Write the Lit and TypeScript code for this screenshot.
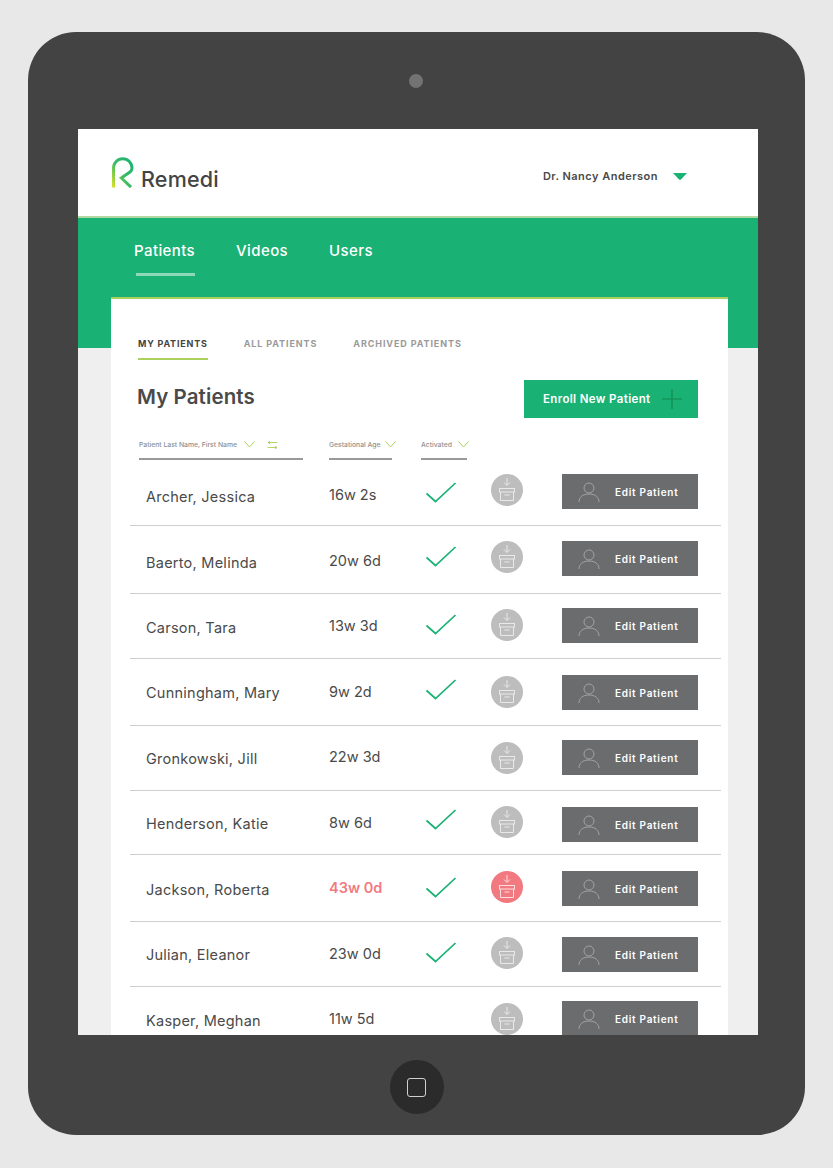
import { LitElement, html, css, svg } from "lit";
import { customElement } from "lit/decorators.js";

interface Row {
  name: string; age: string; top: number; bottom: number;
  nameY: number; ageY: number; checkY: number | null; archY: number; btnY: number;
  alert?: boolean;
}

const rows: Row[] = [
  { name: "Archer, Jessica", age: "16w 2s", top: 460, bottom: 526, nameY: 497, ageY: 495, checkY: 493, archY: 490, btnY: 491.5 },
  { name: "Baerto, Melinda", age: "20w 6d", top: 526, bottom: 594, nameY: 563, ageY: 561, checkY: 557, archY: 557, btnY: 558.5 },
  { name: "Carson, Tara", age: "13w 3d", top: 594, bottom: 659, nameY: 628, ageY: 626, checkY: 625, archY: 625, btnY: 625.5 },
  { name: "Cunningham, Mary", age: "9w 2d", top: 659, bottom: 726, nameY: 693, ageY: 692, checkY: 690, archY: 692, btnY: 692.5 },
  { name: "Gronkowski, Jill", age: "22w 3d", top: 726, bottom: 791, nameY: 759, ageY: 757, checkY: null, archY: 758, btnY: 757.5 },
  { name: "Henderson, Katie", age: "8w 6d", top: 791, bottom: 855, nameY: 824, ageY: 823, checkY: 820, archY: 822, btnY: 824.5 },
  { name: "Jackson, Roberta", age: "43w 0d", top: 855, bottom: 922, nameY: 890, ageY: 888, checkY: 888, archY: 887, btnY: 888.5, alert: true },
  { name: "Julian, Eleanor", age: "23w 0d", top: 922, bottom: 987, nameY: 955, ageY: 954, checkY: 953, archY: 953, btnY: 954.5 },
  { name: "Kasper, Meghan", age: "11w 5d", top: 987, bottom: 1050, nameY: 1021, ageY: 1019, checkY: null, archY: 1019, btnY: 1018.5 },
];

const chevron = svg`<svg class="chev" width="11" height="7" viewBox="0 0 11 7"><path d="M.5 .5 5.5 6 10.5 .5" fill="none" stroke="#a9d15c" stroke-width="1"/></svg>`;

@customElement("app-root")
export class AppRoot extends LitElement {
  static styles = css`
    :host { display: block; height: 1168px; background: #e8e8e8; font-family: Inter, Roboto, "Liberation Sans", sans-serif; overflow: hidden; }
    .device { margin: 32px 28px 0; width: 777px; height: 1103px; border-radius: 48px; background: #434344; display: flex; flex-direction: column; align-items: flex-start; }
    .bezel-top { height: 97px; flex: none; align-self: stretch; display: flex; align-items: center; justify-content: center; }
    .camera { width: 14px; height: 14px; border-radius: 50%; background: #737373; margin: 0 1px 0 0; }
    .screen { width: 680px; height: 906px; flex: none; margin-left: 50px; background: #efefef; overflow: hidden; display: flex; flex-direction: column; }
    .bezel-bottom { flex: 1; align-self: stretch; display: flex; align-items: center; justify-content: center; padding-top: 4px; }
    .home { width: 54px; height: 54px; border-radius: 50%; background: #2b2b2c; display: flex; align-items: center; justify-content: center; }
    .home i { display: block; width: 17px; height: 17px; border: 1px solid #d0d0d0; border-radius: 3px; }

    .top { height: 87px; flex: none; background: #fff; display: flex; align-items: center; justify-content: space-between; padding: 0 71px 0 34px; }
    .logo { display: flex; align-items: flex-end; gap: 7px; }
    .logo span { font-size: 21.5px; font-weight: 500; color: #444; line-height: 20px; letter-spacing: .2px; }
    .user { display: flex; align-items: center; gap: 15px; font-size: 11px; font-weight: 600; color: #4a4a4a; letter-spacing: .48px; margin-top: 7px; }
    .rule { height: 2px; flex: none; background: #b4d8a2; }
    .body { flex: 1; padding: 0 30px 0 33px; background: linear-gradient(#19b174 130px, #efefef 130px); }
    nav { height: 79px; display: flex; gap: 41px; padding-left: 23px; }
    nav a { color: #fff; font-size: 15px; font-weight: 500; letter-spacing: .4px; height: 58px; line-height: 66px; box-sizing: border-box; }
    nav a.on { background: linear-gradient(#8fd9bb, #8fd9bb) 2px 100% / 59px 3px no-repeat; }
    .card { background: #fff; border-top: 2px solid #a9d15c; height: 760px; padding-left: 19px; padding-right: 7px; }
    .tabs { display: flex; gap: 36px; padding-left: 8px; height: 63px; box-sizing: border-box; padding-top: 31px; }
    .tabs span { font-size: 9px; font-weight: 700; letter-spacing: .9px; color: #9a9a9a; height: 30px; line-height: 27px; box-sizing: border-box; }
    .tabs span.on { color: #444; border-bottom: 2px solid #a9d15c; letter-spacing: .8px; }
    .title { display: flex; align-items: center; justify-content: space-between; height: 38px; margin-top: 18px; padding: 0 23px 0 7px; }
    h1 { margin: 0 0 6px; font-size: 20.5px; font-weight: 600; color: #4a4a4a; letter-spacing: .1px; }
    .enroll { width: 174px; height: 38px; background: #19b174; color: #fff; font-size: 11.5px; font-weight: 600; letter-spacing: .36px; display: flex; align-items: center; padding-left: 19px; box-sizing: border-box; gap: 11px; }
    .heads { display: flex; margin-top: 15px; padding-left: 9px; height: 27px; }
    .head { height: 27px; box-sizing: border-box; border-bottom: 2px solid #999; font-size: 6.8px; font-weight: 500; color: #8f8f8f; display: flex; align-items: center; gap: 7px; white-space: nowrap; padding-bottom: 2px; }
    .head.age-col { gap: 4px; }
    .head.act-col { gap: 6px; }
    .chev { flex: none; }
    .row { display: grid; grid-template-columns: 199px 97px 65px 71px 136px; border-bottom: 1px solid #cfcfcf; box-sizing: border-box; align-items: start; }
    .row:last-child { border-bottom: 0; }
    .name { padding-left: 16px; font-size: 14.5px; letter-spacing: .25px; line-height: 20px; color: #4a4a4a; white-space: nowrap; }
    .age { font-size: 14.5px; line-height: 20px; color: #4a4a4a; }
    .age.alert { color: #f2797f; font-weight: 600; }
    .check { display: block; }
    .arch { display: block; }
    .edit { width: 136px; height: 35px; background: #6b6c6e; color: #fff; display: flex; align-items: center; font-size: 10px; font-weight: 600; letter-spacing: .72px; gap: 14px; padding-left: 15px; box-sizing: border-box; }
  `;

  private archive(alert?: boolean) {
    const fill = alert ? "#f2797f" : "#bdbdbd";
    const s = alert ? "#fbdfe0" : "#e9e9e9";
    return svg`<svg class="arch" width="32" height="32" viewBox="0 0 32 32">
      <circle cx="16" cy="16" r="16" fill="${fill}"/>
      <path d="M16 4v7M13 8.5l3 3 3-3" fill="none" stroke="${s}" stroke-width="1"/>
      <rect x="8.5" y="14.5" width="15" height="3.5" fill="none" stroke="${s}" stroke-width="1"/>
      <path d="M9.5 18v8.5h13V18M13.5 21h5" fill="none" stroke="${s}" stroke-width="1"/>
    </svg>`;
  }

  private renderRow(r: Row) {
    const m = (c: number, h: number) => `margin-top:${c - r.top - h / 2}px`;
    return html`<div class="row" style="height:${r.bottom - r.top}px">
      <div class="name" style=${m(r.nameY, 20)}>${r.name}</div>
      <div class="age ${r.alert ? "alert" : ""}" style=${m(r.ageY, 20)}>${r.age}</div>
      <div>${r.checkY === null ? "" : html`<div style=${m(r.checkY, 22)}>
        <svg class="check" width="31" height="22" viewBox="0 0 31 22"><path d="M.5 11.5 9.5 19.5 29.5 1" fill="none" stroke="#19b174" stroke-width="1.7"/></svg></div>`}</div>
      <div style=${m(r.archY, 32)}>${this.archive(r.alert)}</div>
      <div class="edit" style=${m(r.btnY, 35)}>
        <svg width="24" height="22" viewBox="0 0 24 22"><circle cx="12" cy="7" r="5" fill="none" stroke="#a3a3a3"/><path d="M2 21c0-5 4-8 10-8s10 3 10 8" fill="none" stroke="#a3a3a3"/></svg>
        <span>Edit Patient</span>
      </div>
    </div>`;
  }

  render() {
    return html`<div class="device">
      <div class="bezel-top"><div class="camera"></div></div>
      <div class="screen">
        <header class="top">
          <div class="logo">
            <svg width="22" height="32" viewBox="112 156 22 32">
              <defs><linearGradient id="lg" x1="0" y1="1" x2="1" y2="0"><stop offset="0" stop-color="#d2e02e"/><stop offset=".45" stop-color="#3dbb63"/><stop offset="1" stop-color="#19b174"/></linearGradient></defs>
              <path d="M113.5 186.5V167a9.25 9.25 0 0 1 18.5 0c0 2-.6 3-2 4l-8.7 6 9.7 9.2" fill="none" stroke="url(#lg)" stroke-width="3"/>
            </svg>
            <span>Remedi</span>
          </div>
          <div class="user">
            <span>Dr. Nancy Anderson</span>
            <svg width="14" height="7" viewBox="0 0 14 7"><path d="M0 0h14L8 6.4q-1 .9-2 0z" fill="#19b174"/></svg>
          </div>
        </header>
        <div class="rule"></div>
        <div class="body">
          <nav><a class="on">Patients</a><a>Videos</a><a>Users</a></nav>
          <section class="card">
            <div class="tabs"><span class="on">MY PATIENTS</span><span>ALL PATIENTS</span><span>ARCHIVED PATIENTS</span></div>
            <div class="title">
              <h1>My Patients</h1>
              <div class="enroll"><span>Enroll New Patient</span>
                <svg width="20" height="20" viewBox="0 0 20 20"><path d="M10 0v20M0 10h20" stroke="#128a4f" stroke-width="1.2"/></svg>
              </div>
            </div>
            <div class="heads">
              <div class="head" style="width:164px"><span>Patient Last Name, First Name</span>${chevron}
                <svg style="margin-left:5px" width="11" height="8" viewBox="0 0 11 8"><path d="M10.5 1.5H1M3 .2 1 1.5 3 2.8M.5 6.5H10M8 5.2 10 6.5 8 7.8" fill="none" stroke="#a9d15c" stroke-width=".9"/></svg>
              </div>
              <div style="width:26px"></div>
              <div class="head age-col" style="width:63px"><span>Gestational Age</span>${chevron}</div>
              <div style="width:29px"></div>
              <div class="head act-col" style="width:46px"><span>Activated</span>${chevron}</div>
            </div>
            ${rows.map((r) => this.renderRow(r))}
          </section>
        </div>
      </div>
      <div class="bezel-bottom"><div class="home"><i></i></div></div>
    </div>`;
  }
}
